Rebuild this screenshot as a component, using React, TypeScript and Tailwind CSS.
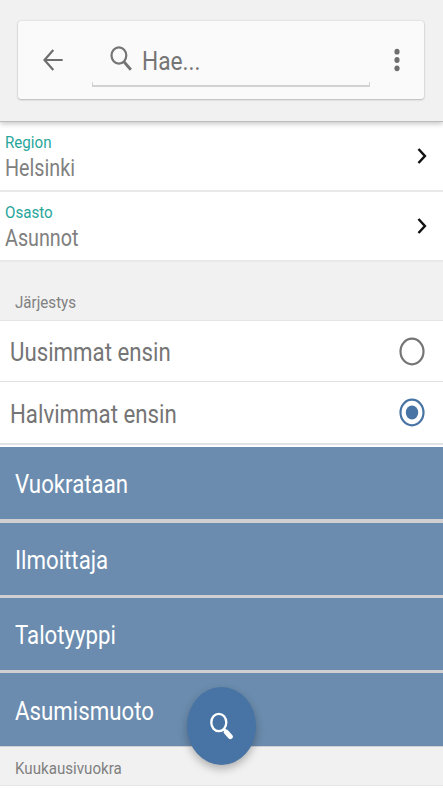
import React from "react";

const filters = [
  { label: "Vuokrataan", height: "h-[76px]", line: "border-b-4" },
  { label: "Ilmoittaja", height: "h-[75px]", line: "border-b-[3px]" },
  { label: "Talotyyppi", height: "h-[75px]", line: "border-b-[3px]" },
  { label: "Asumismuoto", height: "h-[74px]", line: "border-b" },
];

const Text = ({
  className = "",
  scale = "scale-x-[0.89]",
  children,
}: {
  className?: string;
  scale?: string;
  children: React.ReactNode;
}) => (
  <span
    className={`block w-max origin-left whitespace-nowrap ${scale} ${className}`}
  >
    {children}
  </span>
);

const PickerRow = ({ label, value }: { label: string; value: string }) => (
  <div className="flex h-[70px] items-center justify-between border-b-2 border-[#e9e9e9] bg-white pl-[5px] pr-[16px]">
    <div className="pt-[2px]">
      <Text className="text-[17px] leading-[22px] text-[#26a69a]">{label}</Text>
      <Text
        scale="scale-x-[0.84]"
        className="text-[23.5px] leading-[31px] text-[#808080]"
      >
        {value}
      </Text>
    </div>
    <svg className="h-[16px] w-[10px]" viewBox="0 0 10 16" fill="none">
      <path d="M1.5 1l6.4 7-6.4 7" stroke="#111" strokeWidth="2.5" />
    </svg>
  </div>
);

const RadioRow = ({ label, checked }: { label: string; checked?: boolean }) => (
  <div className="flex h-full items-center justify-between bg-white pl-[10px] pr-[18px]">
    <Text className="mt-[4px] text-[25px] leading-[30px] text-[#757575]">{label}</Text>
    <svg
      className={`h-[29px] w-[26px] ${checked ? "text-[#4774a4]" : "text-[#757575]"}`}
      viewBox="0 0 26 29"
      fill="none"
    >
      <ellipse cx="13" cy="14.5" rx="11.5" ry="12.8" stroke="currentColor" strokeWidth="2.2" />
      {checked && <ellipse cx="13" cy="14.5" rx="6.2" ry="7" fill="currentColor" />}
    </svg>
  </div>
);

const App = () => {
  return (
    <main className="relative h-[788px] w-[443px] overflow-hidden bg-white font-['Roboto',sans-serif]">
      <header className="relative flex h-[122px] flex-col border-b border-[#bcbcbc] bg-[#f1f1f1] px-[18px] pt-[21px] shadow-[0_2px_5px_rgba(0,0,0,0.22)]">
        <div className="flex h-[78px] w-[406px] items-center rounded-[3px] bg-[#fafafa] shadow-[0_1px_2px_rgba(0,0,0,0.2),0_0_2px_rgba(0,0,0,0.16)]">
          <svg className="ml-[25px] h-[22px] w-[20px]" viewBox="0 0 20 22" fill="none">
            <path d="M10.3 1L1.5 11l8.8 10M1.5 11H19.7" stroke="#6e6e6e" strokeWidth="2.2" />
          </svg>
          <div className="ml-[29px] flex h-[54px] w-[278px] flex-col">
            <div className="flex h-[49px] items-center pl-[18px] pt-[6px]">
              <svg className="-mt-[4px] h-[25px] w-[22px] shrink-0" viewBox="0 0 22 25" fill="none">
                <ellipse cx="8.9" cy="9.5" rx="7.4" ry="8.1" stroke="#757575" strokeWidth="2.2" />
                <path d="M13.7 15.5l7.2 8.2" stroke="#757575" strokeWidth="2.9" />
              </svg>
              <Text className="ml-[9.5px] text-[25.5px] leading-[30px] text-[#757575]">
                Hae...
              </Text>
            </div>
            <div className="h-[5px] border-x border-b-2 border-[#d2d2d2]" />
          </div>
          <svg className="ml-[24px] h-[24px] w-[6px]" viewBox="0 0 6 24" fill="#6e6e6e">
            <ellipse cx="3" cy="3.7" rx="2.6" ry="2.9" />
            <ellipse cx="3" cy="12" rx="2.6" ry="2.9" />
            <ellipse cx="3" cy="20.3" rx="2.6" ry="2.9" />
          </svg>
        </div>
      </header>

      <section>
        <PickerRow label="Region" value="Helsinki" />
        <PickerRow label="Osasto" value="Asunnot" />
      </section>

      <section>
        <div className="flex h-[59px] items-end border-b border-[#e4e4e4] bg-[#f1f1f1] pb-[8px] pl-[15px]">
          <Text className="text-[17px] leading-[20px] text-[#808080]">Järjestys</Text>
        </div>
        <div className="h-[61px] border-b border-[#e2e2e2]">
          <RadioRow label="Uusimmat ensin" />
        </div>
        <div className="h-[63px] border-b-2 border-[#e3e3e3]">
          <RadioRow label="Halvimmat ensin" checked />
        </div>
      </section>

      <section className="mt-[2px]">
        {filters.map((f) => (
          <div
            key={f.label}
            className={`flex items-center border-[#d0d0d3] bg-[#6b8cae] pl-[15px] ${f.height} ${f.line}`}
          >
            <Text className="mt-[4px] text-[25px] leading-[30px] text-white">{f.label}</Text>
          </div>
        ))}
      </section>

      <div className="flex h-[39px] items-center border-b border-[#e6e6e6] bg-[#f1f1f1] pl-[15px] pt-[4px]">
        <Text className="text-[17px] leading-[20px] text-[#808080]">Kuukausivuokra</Text>
      </div>

      <button className="absolute left-[187px] top-[687px] flex h-[78px] w-[69px] items-center justify-center rounded-[50%] bg-[#4774a4] shadow-[0_4px_8px_rgba(0,0,0,0.27)]">
        <svg className="h-[28px] w-[24px]" viewBox="0 0 24 28" fill="none">
          <ellipse cx="8.8" cy="10.5" rx="7.5" ry="8.7" stroke="#fff" strokeWidth="2.3" />
          <path d="M13.6 16.8l2.2 2.6" stroke="#fff" strokeWidth="2.8" />
          <path d="M16.3 20.2l4 4.5" stroke="#fff" strokeWidth="5" strokeLinecap="round" />
        </svg>
      </button>
    </main>
  );
};

export default App;
